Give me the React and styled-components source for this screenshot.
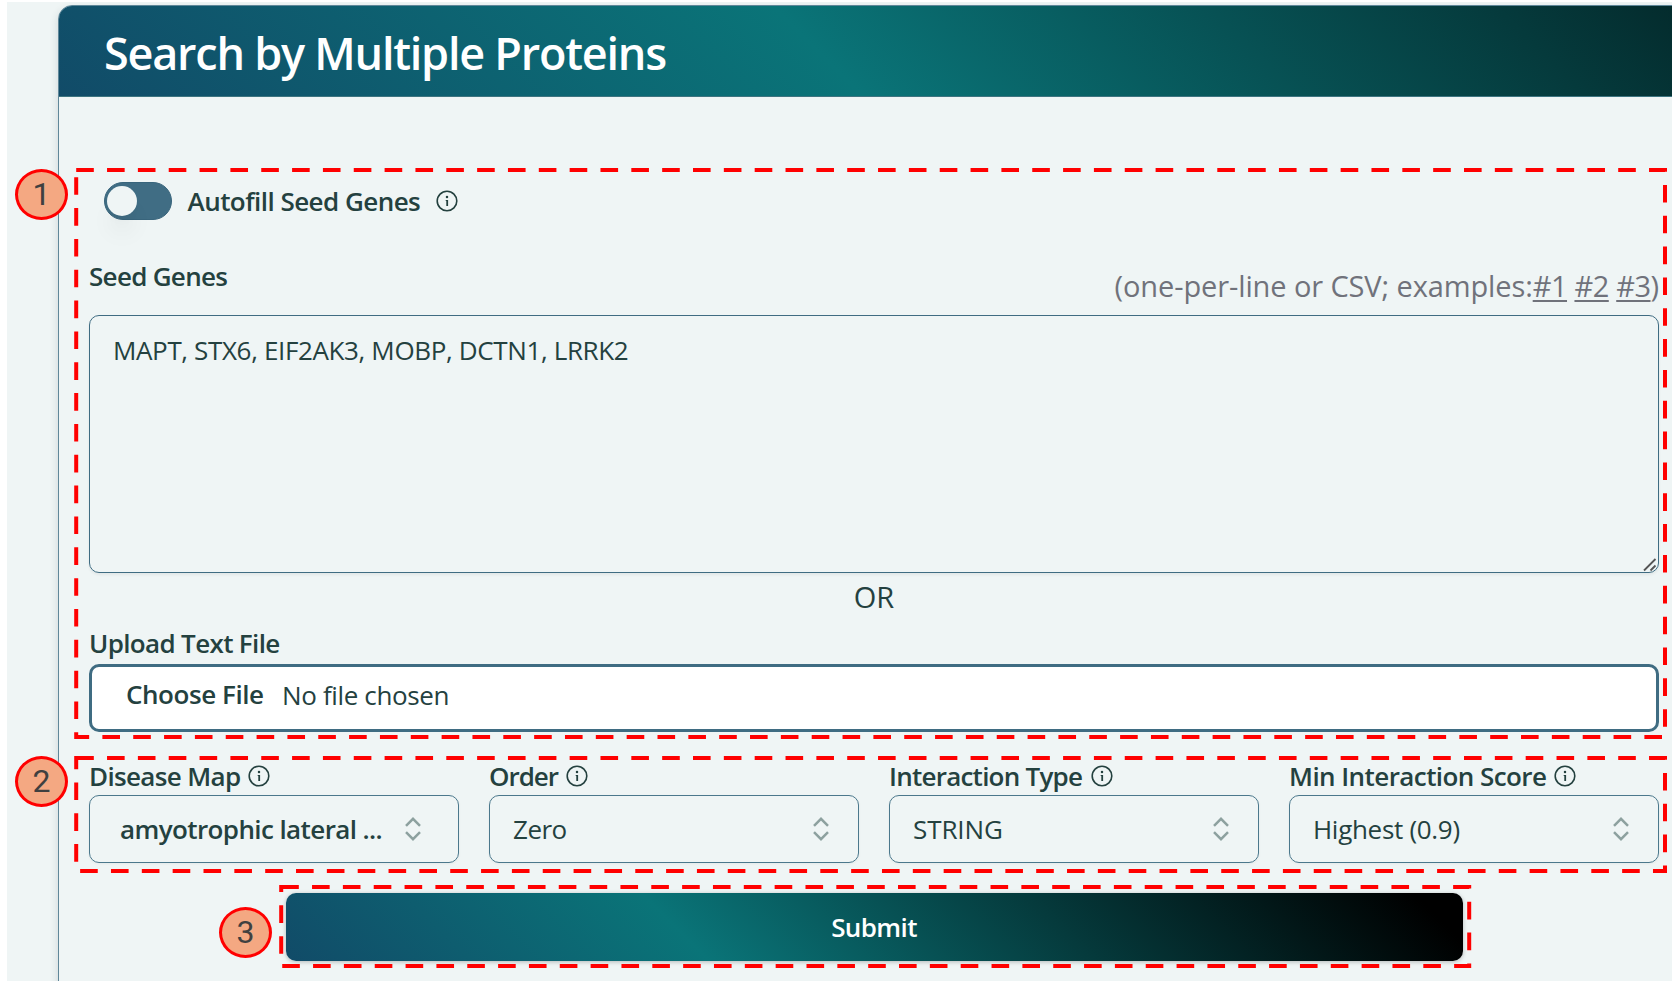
import React from "react";
import styled, { createGlobalStyle } from "styled-components";

const line = "#3f6c82";
const ink = "#24413f";

const GlobalStyle = createGlobalStyle`
  *, *::before, *::after { box-sizing: border-box; }
  html, body { margin: 0; padding: 0; background: #fff; }
  body { font-family: "Open Sans", "Noto Sans", sans-serif; color: ${ink}; overflow: hidden; }
`;

const Page = styled.div`
  position: relative;
  width: 1678px;
  height: 985px;
  padding: 2px 6px 4px 7px;
  background: #fff;
`;

const Canvas = styled.main`
  height: 979px;
  padding: 3px 0 0 51px;
  background: #eff5f5;
  overflow: hidden;
`;

const Card = styled.section`
  width: 1700px;
  height: 1100px;
  border: 1px solid #5f8799;
  border-radius: 14px;
  background: #eff5f5;
  box-shadow: 0 4px 9px rgba(40, 60, 70, 0.16);
  overflow: hidden;
`;

const CardHeader = styled.header`
  display: flex;
  align-items: center;
  height: 91px;
  padding: 4px 0 0 45px;
  border-bottom: 1px solid #3d7480;
  background: linear-gradient(45deg, #114b68 0, #0a7478 569px, #000 1590px);
`;

const Title = styled.h1`
  margin: 0;
  font-size: 45px;
  font-weight: 600;
  line-height: 60px;
  letter-spacing: -1.23px;
  color: #fff;
  white-space: nowrap;
`;

const Form = styled.form`
  display: flex;
  flex-direction: column;
  width: 1570px;
  margin: 85px 0 0 30px;
`;

const ToggleRow = styled.div`
  display: flex;
  align-items: center;
  height: 38.5px;
  margin-left: 15px;
`;

const Toggle = styled.span`
  display: flex;
  align-items: center;
  width: 67.5px;
  height: 38px;
  margin-right: 16px;
  padding-left: 2px;
  border-radius: 20px;
  background: #406d84;
  border: 1px solid #39657c;
`;

const Knob = styled.span`
  width: 30px;
  height: 30px;
  border-radius: 50%;
  background: #eff5f5;
  box-shadow: 0 20px 25px -5px rgba(0, 0, 0, 0.08), 0 8px 12px -6px rgba(0, 0, 0, 0.05);
`;

const Label = styled.span`
  font-size: 26px;
  font-weight: 600;
  line-height: 36px;
  letter-spacing: ${(p) => p.$track}px;
  white-space: pre;
`;

const Icon = styled.svg`
  display: block;
  flex: none;
  width: 24px;
  height: 24px;
  margin-left: ${(p) => p.$gap}px;
`;

const SeedHeader = styled.div`
  display: flex;
  justify-content: space-between;
  height: 57.5px;
  margin-top: 37px;
`;

const Hint = styled.span`
  margin-top: 8px;
  font-size: 29px;
  line-height: 40px;
  letter-spacing: -0.11px;
  color: #70727b;
  white-space: pre;
`;

const Example = styled.span`
  letter-spacing: -0.5px;
  text-decoration: underline;
  text-decoration-thickness: 2px;
  text-underline-offset: 3px;
`;

const SeedBox = styled.div`
  position: relative;
  height: 258px;
`;

const SeedInput = styled.textarea`
  display: block;
  width: 100%;
  height: 100%;
  padding: 16px 23px;
  border: 1.4px solid ${line};
  border-radius: 10px;
  outline: none;
  resize: none;
  background: transparent;
  color: ${ink};
  font: 400 26px/36px "Open Sans", "Noto Sans", sans-serif;
  letter-spacing: -0.36px;
  box-shadow: 0 2px 3px rgba(0, 0, 0, 0.06);
`;

const ResizeGrip = styled.svg`
  position: absolute;
  right: 2px;
  bottom: 1px;
  width: 14px;
  height: 14px;
`;

const Or = styled.div`
  height: 52px;
  padding-top: 4px;
  font-size: 29px;
  line-height: 40px;
  text-align: center;
`;

const FileInput = styled.div`
  display: flex;
  align-items: center;
  height: 67.5px;
  margin-top: 3px;
  padding: 0 34px 8px;
  border: 3px solid ${line};
  border-radius: 10px;
  background: #fff;
`;

const FileStatus = styled.span`
  margin: 2px 0 0 18.5px;
  font-size: 26px;
  line-height: 36px;
  letter-spacing: -0.36px;
`;

const Fields = styled.div`
  display: grid;
  grid-template-columns: repeat(4, 370px);
  column-gap: 30px;
  margin-top: 25.5px;
`;

const FieldLabel = styled.div`
  display: flex;
  align-items: center;
  height: 38px;
  padding-bottom: 1px;
`;

const Select = styled.div`
  display: flex;
  align-items: center;
  justify-content: space-between;
  height: 68px;
  padding: 0 ${(p) => (p.$strong ? 36 : 28.5)}px 0 ${(p) => (p.$strong ? 30 : 23)}px;
  border: 1.4px solid #4b788c;
  border-radius: 10px;
  box-shadow: 0 1px 3px rgba(0, 0, 0, 0.05);
  font-size: 26px;
  font-weight: ${(p) => (p.$strong ? 600 : 400)};
  letter-spacing: ${(p) => p.$track}px;
  white-space: pre;
`;

const Caret = styled.svg`
  width: 18px;
  height: 24px;
  flex: none;
`;

const Submit = styled.button`
  align-self: center;
  width: 1177px;
  height: 67.5px;
  margin-top: 30px;
  padding: 0;
  border: none;
  border-radius: 10px;
  background: linear-gradient(45deg, #114b68 0%, #0a7478 34%, #000 96%);
  box-shadow: 0 1px 4px rgba(0, 0, 0, 0.25);
  color: #fff;
  font: 600 26px/36px "Open Sans", "Noto Sans", sans-serif;
  letter-spacing: -0.6px;
`;

const Annotations = styled.svg`
  position: absolute;
  inset: 0;
  width: 1678px;
  height: 985px;
  pointer-events: none;
`;

const Badge = styled.div`
  position: absolute;
  left: ${(p) => p.$x}px;
  top: ${(p) => p.$y}px;
  display: flex;
  align-items: center;
  justify-content: center;
  width: 53px;
  height: 51px;
  padding-bottom: 1px;
  border: 3px solid #f00;
  border-radius: 50%;
  background: #f4a882;
  color: #404040;
  font: 400 32px/36px Roboto, sans-serif;
`;

function InfoIcon({ gap }) {
  return (
    <Icon $gap={gap} viewBox="0 0 24 24" fill={ink}>
      <circle cx="12" cy="12" r="9.8" fill="none" stroke={ink} strokeWidth="1.6" />
      <circle cx="12" cy="7.9" r="1.25" />
      <path d="M10.7 11H13.1V17H11.3V12H10.7Z" />
    </Icon>
  );
}

function SortCaret() {
  return (
    <Caret viewBox="0 0 18 24" fill="none" stroke="#8da19f" strokeWidth="2.5">
      <path d="M2 8.8L9 1.8L16 8.8M2 15.2L9 22.2L16 15.2" />
    </Caret>
  );
}

const fields = [
  { label: "Disease Map", track: -0.65, gap: 6, value: "amyotrophic lateral ...", valueTrack: -0.6, strong: true },
  { label: "Order", track: -1, gap: 7, value: "Zero", valueTrack: -0.5 },
  { label: "Interaction Type", track: -0.76, gap: 8, value: "STRING", valueTrack: -0.1 },
  { label: "Min Interaction Score", track: -0.57, gap: 6.5, value: "Highest (0.9)", valueTrack: -0.3 },
];

const outlines = [
  [76.2, 170, 1588.8, 567],
  [76.2, 758, 1588.8, 113],
  [281.2, 887, 1188, 79],
];

const badges = [
  { n: 1, x: 15, y: 169 },
  { n: 2, x: 15, y: 756 },
  { n: 3, x: 219, y: 907 },
];

export default function App() {
  return (
    <Page>
      <GlobalStyle />
      <Canvas>
        <Card>
          <CardHeader>
            <Title>Search by Multiple Proteins</Title>
          </CardHeader>
          <Form>
            <ToggleRow>
              <Toggle>
                <Knob />
              </Toggle>
              <Label $track={-0.54}>Autofill Seed Genes</Label>
              <InfoIcon gap={14.5} />
            </ToggleRow>
            <SeedHeader>
              <Label $track={-0.7}>Seed Genes</Label>
              <Hint>
                (one-per-line or CSV; examples:<Example>#1</Example> <Example>#2</Example> <Example>#3</Example>)
              </Hint>
            </SeedHeader>
            <SeedBox>
              <SeedInput readOnly spellCheck={false} value="MAPT, STX6, EIF2AK3, MOBP, DCTN1, LRRK2" />
              <ResizeGrip viewBox="0 0 14 14" stroke="#555" strokeWidth="1.8">
                <path d="M1 12.5L12.5 1M7.5 12.5L12.5 7.5" />
              </ResizeGrip>
            </SeedBox>
            <Or>OR</Or>
            <Label $track={-0.65}>Upload Text File</Label>
            <FileInput>
              <Label $track={-0.45}>Choose File</Label>
              <FileStatus>No file chosen</FileStatus>
            </FileInput>
            <Fields>
              {fields.map((f) => (
                <div key={f.label}>
                  <FieldLabel>
                    <Label $track={f.track}>{f.label}</Label>
                    <InfoIcon gap={f.gap} />
                  </FieldLabel>
                  <Select $strong={f.strong} $track={f.valueTrack}>
                    {f.value}
                    <SortCaret />
                  </Select>
                </div>
              ))}
            </Fields>
            <Submit type="button">Submit</Submit>
          </Form>
        </Card>
      </Canvas>
      <Annotations fill="none" stroke="#f00" strokeWidth="4" strokeDasharray="17.62 13.22">
        {outlines.map(([x, y, w, h]) => (
          <rect key={y} x={x} y={y} width={w} height={h} />
        ))}
      </Annotations>
      {badges.map((b) => (
        <Badge key={b.n} $x={b.x} $y={b.y}>
          {b.n}
        </Badge>
      ))}
    </Page>
  );
}
